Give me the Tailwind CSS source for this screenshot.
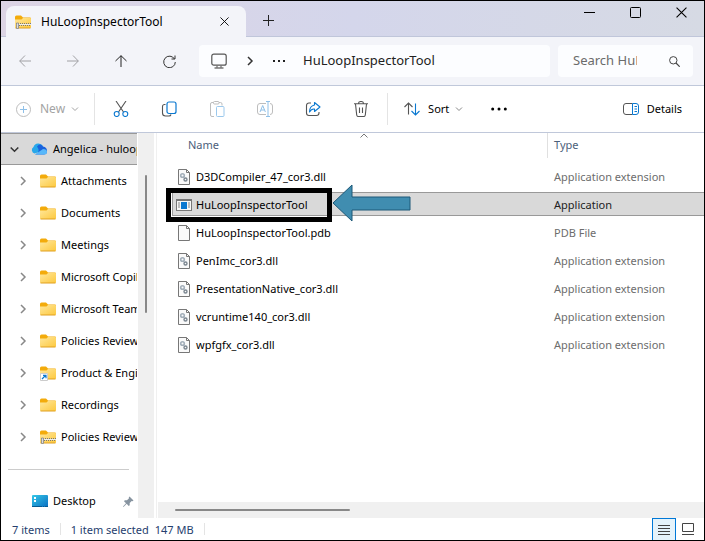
<!DOCTYPE html>
<html lang="en">
<head>
  <meta charset="UTF-8" />
  <meta name="viewport" content="width=device-width, initial-scale=1.0"/>
  <title>HuLoopInspectorTool</title>
  <script src="https://cdn.jsdelivr.net/npm/@tailwindcss/browser@4"></script>
</head>
<body class="h-screen min-h-[541px] flex flex-col border border-black bg-white font-['Noto_Sans',sans-serif] text-[11px] text-black overflow-hidden">

  <!-- Shared icons -->
  <svg class="absolute size-0">
    <defs>
      <linearGradient id="gold" x1="0" y1="0" x2="1" y2="1"><stop offset="0" stop-color="#ffe79b"/><stop offset="1" stop-color="#fdc93f"/></linearGradient>
      <linearGradient id="sky" x1="0" y1="0" x2="1" y2="1"><stop offset="0" stop-color="#35c8e8"/><stop offset="1" stop-color="#0a6fc2"/></linearGradient>
    </defs>
    <symbol id="folder" viewBox="0 0 16 16">
      <path d="M0 3q0-1.500 1.500-1.500H6L8 3.500h7q1 0 1 1V8H0z" fill="#f3ab0b"/>
      <path d="M0 5.500h6.500L8 4h7.200q.8 0 .8.800v8.400q0 .8-.8.800H.8q-.8 0-.8-.8z" fill="url(#gold)"/>
      <path d="M.5 14h15" stroke="#e0a020"/>
    </symbol>
    <symbol id="zip" viewBox="0 0 16 16">
      <use href="#folder"/>
      <path d="M1 9.500h15" stroke="#777" stroke-dasharray="1 1"/>
      <path d="M1 10.500h15" stroke="#eee"/>
      <path d="M2 11.500h14" stroke="#777" stroke-dasharray="1 1"/>
      <path d="M1.500 9h2v5.500h-2z" fill="#ddd" stroke="#888" stroke-width=".8"/>
    </symbol>
    <symbol id="right" viewBox="0 0 8 10"><path d="M2 1l4 4-4 4" fill="none" stroke="currentColor" stroke-width="1.500"/></symbol>
    <symbol id="down" viewBox="0 0 8 6"><path d="M1 1.500l3 3 3-3" fill="none" stroke="currentColor"/></symbol>
    <symbol id="page" viewBox="0 0 14 16">
      <path d="M1.500.5h8l3 3v12h-11z" fill="#fafafa" stroke="#777"/>
      <path d="M9.500.5v3h3" fill="none" stroke="#777"/>
    </symbol>
    <symbol id="dll" viewBox="0 0 14 16">
      <use href="#page"/>
      <circle cx="5.500" cy="6.500" r="1.800" fill="none" stroke="#a3afba" stroke-width="1.600"/>
      <circle cx="8.500" cy="10.500" r="1.500" fill="none" stroke="#7c8791" stroke-width="1.400"/>
    </symbol>
    <symbol id="cross" viewBox="0 0 10 10"><path d="M.5.5l9 9M9.500.5l-9 9" stroke="currentColor"/></symbol>
  </svg>

  <!-- Title bar -->
  <header class="h-9 shrink-0 flex items-end pl-[5px] bg-linear-to-r from-[#dcd4e4] via-[#d4d6eb] to-[#d6dae4] border-b border-[#c0c6da]">
    <div class="w-60 h-[31px] -mb-px flex items-center rounded-t-lg bg-[#f3f4f9] pl-[9px] pr-[17px]">
      <svg class="size-4 mr-2.5"><use href="#zip"/></svg>
      <span class="flex-1 text-xs">HuLoopInspectorTool</span>
      <button aria-label="Close tab"><svg class="size-[9px]"><use href="#cross"/></svg></button>
    </div>
    <button class="w-11 h-[31px] flex items-center justify-center" aria-label="New tab"><svg class="size-[11px]" viewBox="0 0 11 11"><path d="M5.500 0v11M0 5.500h11" stroke="#222"/></svg></button>
    <div class="flex ml-auto self-start">
      <button class="w-[46px] h-[23px] flex items-center justify-center" aria-label="Minimize"><svg class="size-[11px]" viewBox="0 0 11 11"><path d="M0 5.500h11" stroke="#000"/></svg></button>
      <button class="w-[46px] h-[23px] flex items-center justify-center" aria-label="Maximize"><svg class="size-[11px]" viewBox="0 0 11 11"><rect x=".5" y=".5" width="10" height="10" rx="1" fill="none" stroke="#000"/></svg></button>
      <button class="w-[46px] h-[23px] flex items-center justify-center" aria-label="Close"><svg class="size-[11px]"><use href="#cross"/></svg></button>
    </div>
  </header>

  <!-- Navigation -->
  <nav class="h-[49px] shrink-0 flex items-center pr-[11px] bg-[#f3f4f9] border-b border-[#c0c8da] text-[13px]">
    <button class="w-12 flex justify-center text-[#a0a0a4]" aria-label="Back"><svg class="w-3 h-3" viewBox="0 0 12 12"><path d="M12 6H.7M6 .5L.7 6 6 11.500" fill="none" stroke="currentColor"/></svg></button>
    <button class="w-12 flex justify-center text-[#a0a0a4]" aria-label="Forward"><svg class="w-3 h-3" viewBox="0 0 12 12"><path d="M0 6h11.300M6 .5L11.300 6 6 11.500" fill="none" stroke="currentColor"/></svg></button>
    <button class="w-12 flex justify-center" aria-label="Up"><svg class="w-3 h-3" viewBox="0 0 12 12"><path d="M6 12V.7M.5 6L6 .7 11.500 6" fill="none" stroke="#222"/></svg></button>
    <button class="w-12 flex justify-center" aria-label="Refresh"><svg class="w-[13px] h-[13px]" viewBox="0 0 13 13"><path d="M11.500 4A5.800 5.800 0 1 0 12.300 7M12 .5V4H8.500" fill="none" stroke="#333"/></svg></button>
    <div class="flex-1 h-8 ml-1.5 pl-3 flex items-center rounded bg-[#fcfdff]">
      <svg class="w-4 h-4" viewBox="0 0 16 16"><rect x=".8" y="1.200" width="14.400" height="11" rx="2" fill="none" stroke="#555" stroke-width="1.200"/><path d="M6 12v3M10 12v3M3.500 15h9" stroke="#777" stroke-width="1.300"/></svg>
      <svg class="w-2 h-2.5 ml-[19px] mr-[19px] text-[#333]"><use href="#right"/></svg>
      <svg class="w-3 h-1 mr-[18px]" viewBox="0 0 12 4"><path d="M0 1h2v2H0zM5 1h2v2H5zM10 1h2v2h-2z" fill="#222"/></svg>
      <span class="text-[#222]">HuLoopInspectorTool</span>
    </div>
    <label class="w-[135px] h-8 ml-2 pl-[15px] pr-[13px] flex items-center rounded bg-[#fcfdff]">
      <input type="search" aria-label="Search" placeholder="Search HuLoopInspectorTool" class="w-[77px] mr-auto outline-none placeholder:text-[#6b6b6b]">
      <svg class="size-[11px]" viewBox="0 0 11 11"><circle cx="4.300" cy="4.300" r="3.700" fill="none" stroke="#444"/><path d="M7 7l3.700 3.700" stroke="#444" stroke-width="1.200"/></svg>
    </label>
  </nav>

  <!-- Command bar -->
  <div class="h-[47px] shrink-0 flex items-center pl-[15px] pr-[22px] border-b border-[#c0c8da]">
    <button class="flex items-center text-xs text-[#a3a3a3]">
      <svg class="size-[15px] mr-[9px]" viewBox="0 0 15 15"><circle cx="7.500" cy="7.500" r="7" fill="none" stroke="#bdbdbd"/><path d="M7.500 4v7M4 7.500h7" stroke="#8fc0e8"/></svg>
      New
      <svg class="w-2 h-1.5 ml-1.5"><use href="#down"/></svg>
    </button>
    <span class="w-px h-8 ml-[15px] mr-0.5 bg-[#e4e4e4]"></span>
    <button class="w-12 flex justify-center" aria-label="Cut"><svg class="size-4" viewBox="0 0 16 16"><path d="M3 0l7.500 11M13 0L5.500 11" stroke="#555" stroke-width="1.100"/><circle cx="3.700" cy="13" r="2.500" fill="none" stroke="#0a78d0" stroke-width="1.100"/><circle cx="12.300" cy="13" r="2.500" fill="none" stroke="#0a78d0" stroke-width="1.100"/></svg></button>
    <button class="w-12 flex justify-center" aria-label="Copy"><svg class="size-4" viewBox="0 0 16 16"><path d="M4.500 3.500H3.500a2 2 0 0 0-2 2v6.500a3 3 0 0 0 3 3H8a2 2 0 0 0 2-1.500" fill="none" stroke="#555" stroke-width="1.100"/><rect x="6" y="1" width="9" height="11.500" rx="2" fill="none" stroke="#0a78d0" stroke-width="1.200"/></svg></button>
    <button class="w-12 flex justify-center" aria-label="Paste"><svg class="size-4" viewBox="0 0 16 16"><path d="M5 15.500H3a1.500 1.500 0 0 1-1.500-1.500V3A1.500 1.500 0 0 1 3 1.500h1.500M10 1.500h1.500Q13 1.500 13 3v1.500" fill="none" stroke="#bdbdbd"/><rect x="4.500" y=".5" width="5.500" height="2.500" rx="1" fill="none" stroke="#bdbdbd"/><rect x="7.500" y="5.500" width="7.500" height="10" rx="1" fill="none" stroke="#9bc8ec"/></svg></button>
    <button class="w-12 flex justify-center" aria-label="Rename"><svg class="size-4" viewBox="0 0 16 16"><path d="M9 2.500H3a2.500 2.500 0 0 0-2.500 2.500v6A2.500 2.500 0 0 0 3 13.500h6M13 2.500a2.500 2.500 0 0 1 2.500 2.500v6a2.500 2.500 0 0 1-2.500 2.500" fill="none" stroke="#bdbdbd"/><path d="M3 11l2.700-6.500L8.400 11M4 9h3.500M11 .5v15M9 .5h4M9 15.500h4" fill="none" stroke="#8fc0e8"/></svg></button>
    <button class="w-12 flex justify-center" aria-label="Share"><svg class="size-4" viewBox="0 0 16 16"><path d="M6 2H4a2.500 2.500 0 0 0-2.500 2.500v7.500A2.500 2.500 0 0 0 4 14.500h7.500A2.500 2.500 0 0 0 14 12v-1" fill="none" stroke="#555" stroke-width="1.100"/><path d="M9.500 1.500l5.500 4.500-5.500 4.500V8Q6.500 7.500 4.500 11 4.500 5 9.500 4z" fill="none" stroke="#0a78d0" stroke-width="1.100" stroke-linejoin="round"/></svg></button>
    <button class="w-12 flex justify-center" aria-label="Delete"><svg class="size-4" viewBox="0 0 16 16"><path d="M1 2.700h14M5.500 2.500Q5.500.5 8 .5t2.500 2M2.500 3l1.200 11q.2 1.500 1.500 1.500h5.600q1.300 0 1.500-1.500L13.500 3M6.500 6.500v5.500M9.500 6.500v5.500" fill="none" stroke="#555" stroke-width="1.100"/></svg></button>
    <span class="w-px h-8 ml-0.5 mr-4 bg-[#e4e4e4]"></span>
    <button class="flex items-center">
      <svg class="w-4 h-3.5 mr-2" viewBox="0 0 16 14"><path d="M4.500 12.500V1M.5 5l4-4 4 4" fill="none" stroke="#555" stroke-width="1.100"/><path d="M11.500 1.500V13M7.500 9l4 4 4-4" fill="none" stroke="#0a78d0" stroke-width="1.100"/></svg>
      Sort
      <svg class="w-2 h-1.5 ml-1.5 text-[#888]"><use href="#down"/></svg>
    </button>
    <button class="ml-7" aria-label="More"><svg class="w-4 h-1" viewBox="0 0 16 4"><circle cx="1.700" cy="2" r="1.500"/><circle cx="8" cy="2" r="1.500"/><circle cx="14.300" cy="2" r="1.500"/></svg></button>
    <button class="flex items-center ml-auto">
      <svg class="w-4 h-3 mr-2" viewBox="0 0 16 12"><path d="M9.500.5H3A2.500 2.500 0 0 0 .5 3v6A2.500 2.500 0 0 0 3 11.500h6.500" fill="none" stroke="#555"/><path d="M9.500.5H13A2.500 2.500 0 0 1 15.500 3v6a2.500 2.500 0 0 1-2.500 2.500H9.500zM11.500 3.500h2.500M11.500 6h2.500M11.500 8.500h2.500" fill="none" stroke="#0a78d0"/></svg>
      Details
    </button>
  </div>

  <div class="flex-1 min-h-0 flex">
    <!-- Folder tree -->
    <aside class="w-[136px] shrink-0 overflow-hidden whitespace-nowrap">
      <a href="#" class="h-8 flex items-center pl-[9px] bg-[#d9d9d9] border-y border-[#999]">
        <svg class="w-[9px] h-[7px] mr-3 shrink-0" viewBox="0 0 9 7"><path d="M.7 1.500l3.800 3.800 3.800-3.800" fill="none" stroke="#333" stroke-width="1.500"/></svg>
        <svg class="w-4 h-3 mr-1.5 shrink-0" viewBox="0 0 16 12"><path d="M3.500 10.500A3.600 3.600 0 0 1 2.500 4 5.300 5.300 0 0 1 12 3L8 9z" fill="#28a8ea"/><path d="M6 3.500Q9-.5 12 3.500 16 4 16 8t-4 3.500H4Q10 9 6 3.500z" fill="#1a62dd"/><path d="M4 11.500l8-5.500q4 0 4 3 0 2.500-3 2.500z" fill="#58b8fa"/></svg>
        Angelica - huloop
      </a>
      <ul>
        <li><a href="#" class="h-8 flex items-center pl-[18px]"><svg class="w-2 h-2.5 mr-[13px] shrink-0 text-[#888]"><use href="#right"/></svg><svg class="size-4 mr-[5px] shrink-0"><use href="#folder"/></svg>Attachments</a></li>
        <li><a href="#" class="h-8 flex items-center pl-[18px]"><svg class="w-2 h-2.5 mr-[13px] shrink-0 text-[#888]"><use href="#right"/></svg><svg class="size-4 mr-[5px] shrink-0"><use href="#folder"/></svg>Documents</a></li>
        <li><a href="#" class="h-8 flex items-center pl-[18px]"><svg class="w-2 h-2.5 mr-[13px] shrink-0 text-[#888]"><use href="#right"/></svg><svg class="size-4 mr-[5px] shrink-0"><use href="#folder"/></svg>Meetings</a></li>
        <li><a href="#" class="h-8 flex items-center pl-[18px]"><svg class="w-2 h-2.5 mr-[13px] shrink-0 text-[#888]"><use href="#right"/></svg><svg class="size-4 mr-[5px] shrink-0"><use href="#folder"/></svg>Microsoft Copilot</a></li>
        <li><a href="#" class="h-8 flex items-center pl-[18px]"><svg class="w-2 h-2.5 mr-[13px] shrink-0 text-[#888]"><use href="#right"/></svg><svg class="size-4 mr-[5px] shrink-0"><use href="#folder"/></svg>Microsoft Teams</a></li>
        <li><a href="#" class="h-8 flex items-center pl-[18px]"><svg class="w-2 h-2.5 mr-[13px] shrink-0 text-[#888]"><use href="#right"/></svg><svg class="size-4 mr-[5px] shrink-0"><use href="#folder"/></svg>Policies Review</a></li>
        <li><a href="#" class="h-8 flex items-center pl-[18px]"><svg class="w-2 h-2.5 mr-[13px] shrink-0 text-[#888]"><use href="#right"/></svg><svg class="size-4 mr-[5px] shrink-0" viewBox="0 0 16 16"><use href="#folder"/><path d="M.5 8.500h7v7h-7z" fill="#fff" stroke="#ccc"/><path d="M2 14l3.500-3.500M3 10.300h3v3" fill="none" stroke="#0a78d0" stroke-width="1.200"/></svg>Product &amp; Engineering</a></li>
        <li><a href="#" class="h-8 flex items-center pl-[18px]"><svg class="w-2 h-2.5 mr-[13px] shrink-0 text-[#888]"><use href="#right"/></svg><svg class="size-4 mr-[5px] shrink-0"><use href="#folder"/></svg>Recordings</a></li>
        <li><a href="#" class="h-8 flex items-center pl-[18px]"><svg class="w-2 h-2.5 mr-[13px] shrink-0 text-[#888]"><use href="#right"/></svg><svg class="size-4 mr-[5px] shrink-0"><use href="#zip"/></svg>Policies Review</a></li>
      </ul>
      <hr class="ml-[7px] mr-2 mt-4 mb-[15px] border-[#ccc]">
      <a href="#" class="h-8 flex items-center pl-[31px] pr-[3px]">
        <svg class="w-4 h-3 mr-[5px]" viewBox="0 0 16 12"><rect width="16" height="12" rx="1" fill="url(#sky)"/><path d="M2 2h2v2H2zM2 5h2v2H2z" fill="#fff"/><path d="M0 11.500h16" stroke="#075a91" stroke-dasharray="10 1 1 1"/></svg>
        Desktop
        <svg class="size-[11px] ml-auto" viewBox="0 0 11 11"><path d="M6.500.5l4 4-1 .8-.8-.2-2 2v2.200l-1 .7-2-2.300L.5 11 0 10.500l3-3.300L1 5.200l.8-1H4l2-2-.2-.9z" fill="#8794a0"/></svg>
      </a>
    </aside>
    <div class="w-4 ml-px shrink-0 flex justify-center pt-[42px] bg-[#f0f0f0]"><div class="w-0.5 h-[138px] rounded bg-[#888]"></div></div>
    <div class="w-[3px] mr-px shrink-0 border-r border-[#f0f0f0]"></div>

    <!-- File list -->
    <main class="flex-1 min-w-0 flex flex-col">
      <table class="ml-3.5 table-fixed text-left">
        <thead>
          <tr class="h-[29px] align-top text-[#4c607a]">
            <th class="w-[376px] font-normal">
              <div class="relative h-[25px] flex items-center pl-4 border-r border-[#e0e0e0]">
                Name
                <svg class="absolute left-[188px] top-0 w-2 h-1.5" viewBox="0 0 8 6"><path d="M.5 4.500L4 1l3.500 3.500" fill="none" stroke="#777"/></svg>
              </div>
            </th>
            <th class="font-normal"><div class="h-[25px] flex items-center pl-1.5">Type</div></th>
          </tr>
        </thead>
        <tbody class="text-[#6d6d6d]">
          <tr class="h-7">
            <td><div class="h-6 flex items-center pl-1 pt-0.5 text-black"><svg class="w-3.5 h-4 ml-px mr-[5px]"><use href="#dll"/></svg>D3DCompiler_47_cor3.dll</div></td>
            <td><div class="h-6 flex items-center pl-1.5 pt-0.5">Application extension</div></td>
          </tr>
          <tr class="h-7 text-[#222]">
            <td>
              <div class="relative h-6 flex items-center pl-[3px] pt-0.5 bg-[#d9d9d9] border-y border-l border-[#999] text-black">
                <svg class="w-4 h-3 mr-1" viewBox="0 0 16 12"><rect x=".5" y=".5" width="15" height="11" fill="#f7f7f7" stroke="#777"/><path d="M0 1h16" stroke="#777" stroke-width="2"/><path d="M5 3h6v7H5z" fill="#0b78d0"/><path d="M2 4h2M2 6h2M2 8h2M12 4h2M12 6h2M12 8h2" stroke="#888"/></svg>
                HuLoopInspectorTool
                <!-- Callout -->
                <span class="absolute -left-[7px] -top-[5px] w-[166px] h-[34px] border-5 border-black"></span>
                <svg class="absolute left-[159px] -top-[9px] w-[79px] h-[38px]" viewBox="0 0 79 38"><path d="M1 19L20 1v12h58v13H20v11z" fill="#408db0" stroke="#1c5878"/></svg>
              </div>
            </td>
            <td><div class="h-6 flex items-center pl-1.5 pt-0.5 bg-[#d9d9d9] border-y border-[#999]">Application</div></td>
          </tr>
          <tr class="h-7">
            <td><div class="h-6 flex items-center pl-1 pt-0.5 text-black"><svg class="w-3.5 h-4 ml-px mr-[5px]"><use href="#page"/></svg>HuLoopInspectorTool.pdb</div></td>
            <td><div class="h-6 flex items-center pl-1.5 pt-0.5">PDB File</div></td>
          </tr>
          <tr class="h-7">
            <td><div class="h-6 flex items-center pl-1 pt-0.5 text-black"><svg class="w-3.5 h-4 ml-px mr-[5px]"><use href="#dll"/></svg>PenImc_cor3.dll</div></td>
            <td><div class="h-6 flex items-center pl-1.5 pt-0.5">Application extension</div></td>
          </tr>
          <tr class="h-7">
            <td><div class="h-6 flex items-center pl-1 pt-0.5 text-black"><svg class="w-3.5 h-4 ml-px mr-[5px]"><use href="#dll"/></svg>PresentationNative_cor3.dll</div></td>
            <td><div class="h-6 flex items-center pl-1.5 pt-0.5">Application extension</div></td>
          </tr>
          <tr class="h-7">
            <td><div class="h-6 flex items-center pl-1 pt-0.5 text-black"><svg class="w-3.5 h-4 ml-px mr-[5px]"><use href="#dll"/></svg>vcruntime140_cor3.dll</div></td>
            <td><div class="h-6 flex items-center pl-1.5 pt-0.5">Application extension</div></td>
          </tr>
          <tr class="h-7">
            <td><div class="h-6 flex items-center pl-1 pt-0.5 text-black"><svg class="w-3.5 h-4 ml-px mr-[5px]"><use href="#dll"/></svg>wpfgfx_cor3.dll</div></td>
            <td><div class="h-6 flex items-center pl-1.5 pt-0.5">Application extension</div></td>
          </tr>
        </tbody>
      </table>
      <div class="h-4 mt-auto flex items-center pl-[17px] bg-[#f0f0f0]"><div class="w-[175px] h-0.5 rounded bg-[#888]"></div></div>
    </main>
  </div>

  <!-- Status bar -->
  <footer class="h-[22px] shrink-0 flex items-center pl-[11px] pr-[10px] text-[#26406e]">
    <span class="pt-0.5">7 items</span>
    <span class="w-px h-3 mx-2.5 bg-[#e4e4e4]"></span>
    <span class="pt-0.5">1 item selected</span>
    <span class="pt-0.5 ml-1.5">147 MB</span>
    <span class="w-px h-3 ml-2.5 bg-[#e4e4e4]"></span>
    <button class="ml-auto w-6 h-[22px] flex items-center justify-center bg-[#e5f3fb] border border-b-0 border-[#0078d7]" aria-label="Details view"><svg class="w-3 h-2.5" viewBox="0 0 12 10"><path d="M0 .5h12M0 3.500h12M0 6.500h12M0 9.500h12" stroke="#444"/></svg></button>
    <button class="ml-1.5" aria-label="Large icons"><svg class="w-3 h-3" viewBox="0 0 12 12"><path d="M.5.5h11v8H.5zM0 11.500h12" fill="none" stroke="#444"/></svg></button>
  </footer>

</body>
</html>
